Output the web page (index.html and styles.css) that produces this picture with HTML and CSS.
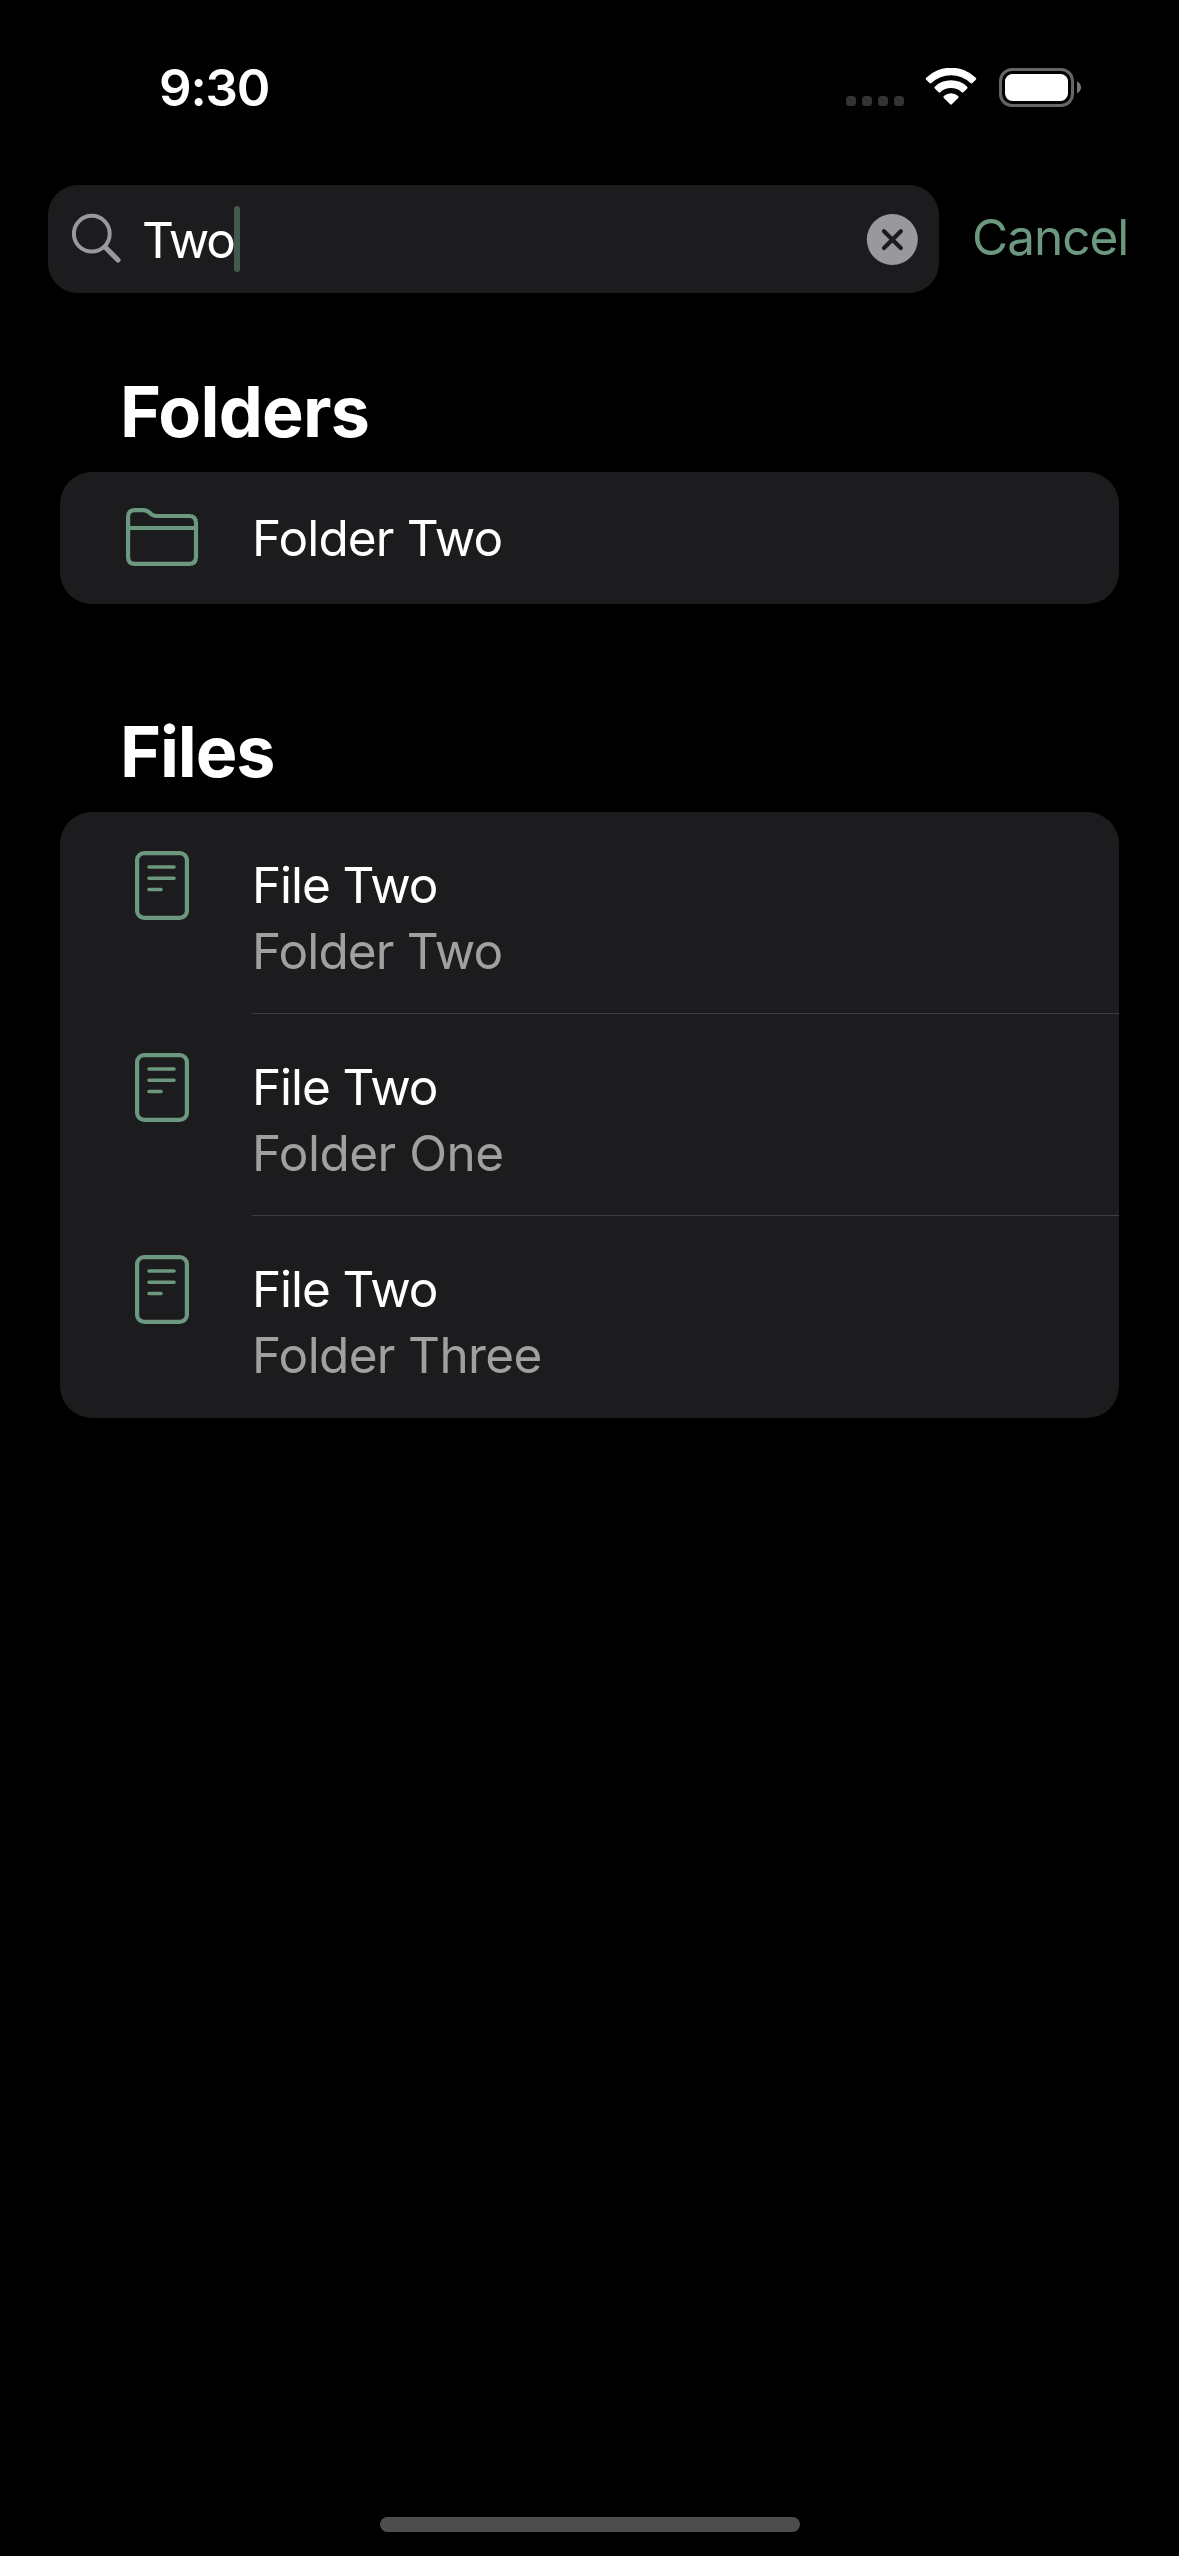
FILE: index.html
```html
<!DOCTYPE html>
<html lang="en">
<head>
<meta charset="utf-8">
<title>Search</title>
<link rel="stylesheet" href="styles.css">
</head>
<body>
<svg width="0" height="0" class="defs">
  <symbol id="file" viewBox="0 0 54 69">
    <rect x="2.1" y="2.1" width="49.8" height="64.8" rx="7" fill="none" stroke="currentColor" stroke-width="4.2"/>
    <path d="M14 16h25M14 27.2h25M14 38.5h12" fill="none" stroke="currentColor" stroke-width="3.6" stroke-linecap="round"/>
  </symbol>
</svg>
<div class="screen">
  <header class="status">
    <span class="time">9:30</span>
    <div class="indicators">
      <div class="dots"><i></i><i></i><i></i><i></i></div>
      <svg class="wifi" width="52" height="38" viewBox="0 0 52 38" fill="#fff">
        <path d="M1.2 9.8Q.3 10.8 1.2 11.7L4.8 15.2Q5.6 16 6.5 15.1A28 28 0 0 1 45.5 15.1Q46.4 16 47.2 15.2L50.8 11.7Q51.7 10.8 50.8 9.8A35.6 35.6 0 0 0 1.2 9.8Z"/>
        <path d="M9.8 18.7Q9 19.6 9.8 20.5L13.6 24.2Q14.4 25 15.3 24.2A15.7 15.7 0 0 1 36.7 24.2Q37.6 25 38.4 24.2L42.2 20.5Q43 19.6 42.2 18.7A23.3 23.3 0 0 0 9.8 18.7Z"/>
        <path d="M18.8 28.1Q18 29 18.8 29.9L25.2 36.3Q26 37.1 26.8 36.3L33.2 29.9Q34 29 33.2 28.1A10.7 10.7 0 0 0 18.8 28.1Z"/>
      </svg>
      <svg class="battery" width="83" height="39" viewBox="0 0 83 39">
        <rect x="1.5" y="1.5" width="72" height="36" rx="11.5" fill="none" stroke="#666" stroke-width="3"/>
        <rect x="6" y="6" width="63" height="27" rx="7.5" fill="#fff"/>
        <path d="M78 13.2Q82 15.2 82 19.2T78 25.2Z" fill="#777"/>
      </svg>
    </div>
  </header>

  <div class="search-row">
    <div class="search">
      <svg class="glass" width="52" height="52" viewBox="0 0 52 52" fill="none" stroke="#98989f" stroke-linecap="round">
        <circle cx="19.8" cy="20.7" r="17.9" stroke-width="4"/>
        <path d="M33.5 34.5L46 47" stroke-width="5.2"/>
      </svg>
      <span class="query">Two</span>
      <span class="caret"></span>
      <svg class="clear" width="52" height="52" viewBox="0 0 52 52">
        <circle cx="26.3" cy="26.5" r="25.5" fill="#98989f"/>
        <path d="M18 18.2L34.8 35M34.8 18.2L18 35" stroke="#1c1c1e" stroke-width="4.2" stroke-linecap="round"/>
      </svg>
    </div>
    <span class="cancel">Cancel</span>
  </div>

  <main>
    <h2 class="folders-title">Folders</h2>
    <section class="card">
      <div class="row folder-row">
        <svg class="icon" width="73" height="58" viewBox="0 0 73 58" fill="none" stroke="currentColor" stroke-width="4.2">
          <path d="M2.1 9Q2.1 2.1 9 2.1H17.5Q20.5 2.1 23 4.2L25.5 6.4Q27.5 8 30.5 8H63Q70 8 70 15V49Q70 55.9 63 55.9H9Q2.1 55.9 2.1 49ZM2 20H70"/>
        </svg>
        <span class="name folder-name">Folder Two</span>
      </div>
    </section>

    <h2 class="files-title">Files</h2>
    <section class="card">
      <div class="row file-row">
        <svg class="icon file-icon"><use href="#file"/></svg>
        <div class="text"><span class="name">File Two</span><span class="parent two">Folder Two</span></div>
      </div>
      <div class="row file-row">
        <svg class="icon file-icon"><use href="#file"/></svg>
        <div class="text"><span class="name">File Two</span><span class="parent">Folder One</span></div>
      </div>
      <div class="row file-row">
        <svg class="icon file-icon"><use href="#file"/></svg>
        <div class="text"><span class="name">File Two</span><span class="parent three">Folder Three</span></div>
      </div>
    </section>
  </main>

  <div class="home"></div>
</div>
</body>
</html>
```

FILE: styles.css
```css
* { box-sizing: border-box; }
body { margin: 0; background: #000; color: #fff; font-family: Inter, "Liberation Sans", sans-serif; font-size: 49.5px; }
svg { display: block; flex: none; }
.defs { position: absolute; }
.screen { height: 2556px; display: flex; flex-direction: column; overflow: hidden; }

.status { height: 185px; padding: 57px 97px 0 159px; display: flex; justify-content: space-between; align-items: flex-start; }
.time { font-size: 51px; font-weight: 600; line-height: 61px; letter-spacing: -1.2px; }
.indicators { display: flex; align-items: flex-start; padding-top: 11px; }
.dots { display: flex; gap: 6px; padding-top: 28px; margin-right: 21px; }
.dots i { width: 10px; height: 10px; border-radius: 3.5px; background: #333; }
.wifi { margin-right: 22px; }

.search-row { display: flex; align-items: center; height: 108px; padding-left: 48px; }
.search { width: 891px; height: 108px; border-radius: 30px; background: #1c1c1e; display: flex; align-items: center; padding: 0 21px 0 24px; }
.glass { margin-right: 18px; }
.query { line-height: 60px; width: 92px; white-space: nowrap; letter-spacing: -2.1px; padding-top: 1px; }
.caret { width: 6px; height: 66px; border-radius: 3px; background: #45594e; }
.clear { margin-left: auto; }
.cancel { margin-left: 33px; line-height: 60px; color: #6b987f; letter-spacing: -1px; padding-bottom: 4px; }

main { padding: 0 60px; flex: 1; }
h2 { margin: 0; padding-left: 60px; font-size: 70px; line-height: 84px; font-weight: 700; }
.folders-title { padding-top: 77px; height: 179px; letter-spacing: -0.75px; }
.files-title { padding-top: 106px; height: 208px; letter-spacing: -1.1px; }
.card { background: #1c1c1e; border-radius: 32px; overflow: hidden; }
.row { display: flex; align-items: flex-start; }
.icon { color: #6b987f; }
.folder-row { height: 132px; padding: 36px 0 0 66px; }
.file-row { height: 202px; padding-left: 75px; }
.file-icon { width: 54px; height: 69px; margin-top: 39px; }
.text { margin-left: 63px; flex: 1; height: 202px; padding-top: 43px; display: flex; flex-direction: column; }
.file-row:not(:last-child) .text { border-bottom: 1px solid #3d3d40; }
.name, .parent { line-height: 60px; white-space: nowrap; }
.name { letter-spacing: -1.1px; }
.folder-name { margin-left: 53px; letter-spacing: -0.85px; }
.parent { color: #a0a0a0; margin-top: 6px; letter-spacing: -0.5px; }
.two { letter-spacing: -0.85px; }
.three { letter-spacing: -0.65px; }

.home { width: 420px; height: 15px; border-radius: 8px; background: #4d4d4d; margin: 0 auto 24px; }
```
